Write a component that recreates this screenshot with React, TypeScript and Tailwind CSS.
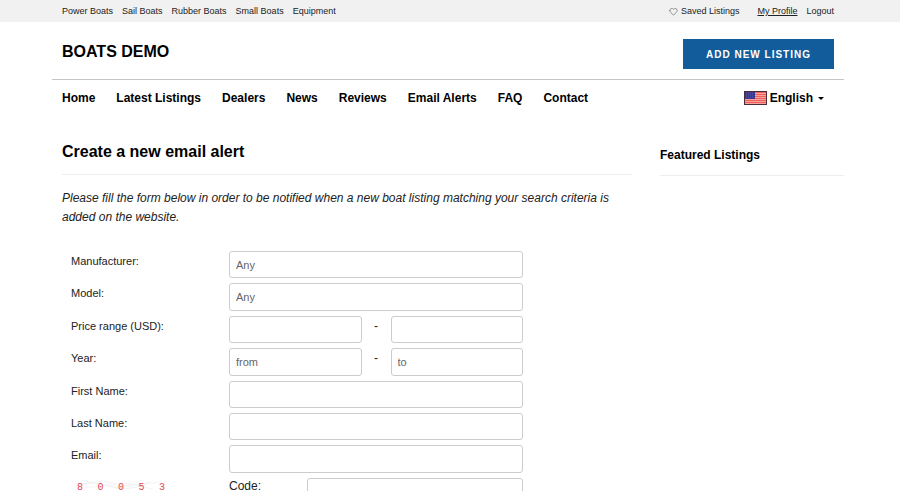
import { Heart } from "lucide-react";

const categories = ["Power Boats", "Sail Boats", "Rubber Boats", "Small Boats", "Equipment"];
const menu = ["Home", "Latest Listings", "Dealers", "News", "Reviews", "Email Alerts", "FAQ", "Contact"];

const rows = [
  { id: "manufacturer", label: "Manufacturer:", fields: [{ name: "manufacturer", placeholder: "Any" }] },
  { id: "model", label: "Model:", fields: [{ name: "model", placeholder: "Any" }] },
  { id: "price", label: "Price range (USD):", fields: [{ name: "price", placeholder: "" }, { name: "price-to", placeholder: "" }] },
  { id: "year", label: "Year:", fields: [{ name: "year", placeholder: "from" }, { name: "year-to", placeholder: "to" }] },
  { id: "first-name", label: "First Name:", fields: [{ name: "first-name", placeholder: "" }] },
  { id: "last-name", label: "Last Name:", fields: [{ name: "last-name", placeholder: "" }] },
  { id: "email", label: "Email:", fields: [{ name: "email", placeholder: "" }] },
];

function TextField({ id, placeholder, label }: { id: string; placeholder?: string; label?: string }) {
  return (
    <input
      id={id}
      name={id}
      type="text"
      placeholder={placeholder}
      aria-label={label}
      className="h-full w-full min-w-0 rounded-[3px] border border-[#ccc] bg-white px-1.5 text-[11px] text-[#555] placeholder:text-[#666]"
    />
  );
}

function FlagUS() {
  return (
    <svg width="23" height="14" viewBox="0 0 23 14" aria-hidden="true">
      <rect width="23" height="14" fill="#f5a29c" />
      {[1, 3, 5, 7, 9, 11, 13].map((y) => (
        <rect key={y} y={y} width="23" height="1" fill="#ee5f5b" />
      ))}
      <rect width="11" height="8" fill="#3a3a90" />
      {[2, 4, 6].map((y) => (
        <path key={y} d={`M2 ${y}h8`} stroke="#6464ae" strokeWidth="0.6" strokeDasharray="1 1" />
      ))}
      <rect x="0.5" y="0.5" width="22" height="13" fill="none" stroke="#4a2c38" />
    </svg>
  );
}

function Captcha() {
  return (
    <div className="relative h-7 w-[100px]">
      <svg className="absolute inset-0" width="100" height="28" viewBox="0 0 100 28" fill="none" aria-hidden="true">
        <path d="M3 6l30-3 26 5 30-4M10 2l36 8 34-6M14 10l40-5 28 6M30 3l18 6 24-7" stroke="#f5f5f5" />
        <path d="M4 8q18-6 34 0t38-2" stroke="#f1f1f1" />
      </svg>
      <div className="relative flex justify-between px-1.5 pt-1 font-['Liberation_Mono',monospace] text-[10px] leading-3 text-[#e5484d]">
        {["8", "0", "0", "5", "3"].map((digit, i) => (
          <span key={i}>{digit}</span>
        ))}
      </div>
    </div>
  );
}

export default function App() {
  return (
    <div className="h-screen overflow-hidden bg-white font-['Liberation_Sans',Arial,sans-serif] text-[#222]">
      {/* Top bar */}
      <div className="bg-[#f1f1f1] pr-1">
        <div className="mx-auto flex h-[22px] max-w-[792px] items-center justify-between px-2.5 text-[9px] leading-3">
          <nav className="flex gap-[9px]">
            {categories.map((item) => (
              <a key={item} href="#">{item}</a>
            ))}
          </nav>
          <div className="flex">
            <a href="#" className="flex items-center gap-[3px]">
              <Heart size={9} strokeWidth={1.8} className="text-[#666]" />
              Saved Listings
            </a>
            <a href="#" className="ml-[18px] underline">My Profile</a>
            <a href="#" className="ml-[9px]">Logout</a>
          </div>
        </div>
      </div>

      <div className="pr-1">
        <div className="mx-auto max-w-[792px]">
          <header className="flex h-[58px] items-center justify-between border-b border-[#c4c4c4] px-2.5 pt-1">
            <a href="#" className="pb-0.5 text-base leading-5 font-bold text-black">BOATS DEMO</a>
            <button type="button" className="mt-0.5 h-[30px] bg-[#125c9b] px-[23px] pt-px text-[10px] font-bold tracking-[1px] text-white">
              ADD NEW LISTING
            </button>
          </header>

          <div className="flex h-9 items-center justify-between px-2.5 text-[12px] font-bold text-black">
            <nav className="flex gap-[21px]">
              {menu.map((item) => (
                <a key={item} href="#">{item}</a>
              ))}
            </nav>
            <button type="button" className="mr-2.5 flex items-center gap-[3px]">
              <FlagUS />
              English
              <span className="ml-0.5 border-x-[3px] border-t-[3px] border-x-transparent border-t-black" />
            </button>
          </div>

          <div className="flex gap-7 pl-2.5 pt-[26px]">
            <main className="min-w-0 flex-1">
              <h1 className="border-b border-[#eee] pb-3 text-base leading-5 font-bold text-black">Create a new email alert</h1>
              <p className="mt-3.5 text-[12px] leading-[19px] italic">
                Please fill the form below in order to be notified when a new boat listing matching your search criteria is
                added on the website.
              </p>

              <form className="mt-6 grid h-[259px] auto-rows-fr pl-[9px]">
                {rows.map((row) => (
                  <div key={row.id} className="grid grid-cols-[158px_minmax(0,294px)] pb-[5px]">
                    <label htmlFor={row.id} className="pt-[3px] text-[11px] leading-[14px]">{row.label}</label>
                    <div className="flex">
                      <TextField id={row.fields[0].name} placeholder={row.fields[0].placeholder} />
                      {row.fields[1] && (
                        <>
                          <span className="w-[29px] shrink-0 pt-0.5 text-center text-[12px] leading-4">-</span>
                          <TextField
                            id={row.fields[1].name}
                            placeholder={row.fields[1].placeholder}
                            label={`${row.label} to`}
                          />
                        </>
                      )}
                    </div>
                  </div>
                ))}
                <div className="grid grid-cols-[158px_78px_minmax(0,216px)] pb-[5px]">
                  <Captcha />
                  <label htmlFor="code" className="pt-0.5 text-[12px] leading-3">Code:</label>
                  <TextField id="code" />
                </div>
              </form>
            </main>

            <aside className="w-[184px] shrink-0">
              <h2 className="border-b border-[#eee] pt-1 pb-[11px] text-[12px] leading-[18px] font-bold text-black">Featured Listings</h2>
            </aside>
          </div>
        </div>
      </div>
    </div>
  );
}
